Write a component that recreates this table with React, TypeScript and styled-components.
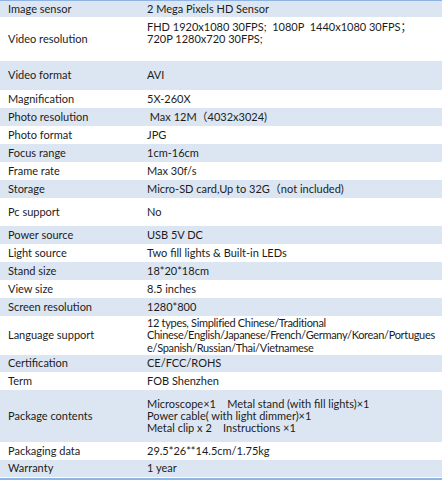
import React from "react";
import styled, { createGlobalStyle } from "styled-components";

const Global = createGlobalStyle`
  html, body { margin: 0; padding: 0; background: #ffffff; }
  body { font-family: Lato, "Liberation Sans", "Noto Sans CJK SC", sans-serif; }
`;

const Table = styled.div`
  width: 442px;
  border-top: 1px solid #8eb4e3;
  border-bottom: 2px solid #8eb4e3;
  padding-bottom: 1px;
  display: flex;
  flex-direction: column;
  box-sizing: border-box;
`;

const Row = styled.div<{ $alt: boolean; $h: number }>`
  display: grid;
  grid-template-columns: 139px 1fr;
  height: ${(p) => p.$h}px;
  background: ${(p) => (p.$alt ? "#dce6f2" : "#ffffff")};
  align-items: center;
  font-size: 11px;
  color: #1c1c1c;
  line-height: 12.2px;
`;

const Label = styled.div`
  padding-left: 8px;
  white-space: nowrap;
`;

const Value = styled.div<{ $tight?: boolean }>`
  padding-left: 8px;
  white-space: pre;
  letter-spacing: ${(p) => (p.$tight ? "-0.32px" : "0")};
`;

const Line = styled.div`
  min-height: 12.2px;
`;

type Spec = { label: string; value: string[]; h: number; tight?: boolean };

const rows: Spec[] = [
  { label: "Image sensor", value: ["2 Mega Pixels HD Sensor"], h: 16 },
  {
    label: "Video resolution",
    value: ["FHD 1920x1080 30FPS;  1080P  1440x1080 30FPS；", "720P 1280x720 30FPS;", ""],
    h: 44,
  },
  { label: "Video format", value: ["AVI"], h: 29 },
  { label: "Magnification", value: ["5X-260X"], h: 18 },
  { label: "Photo resolution", value: [" Max 12M（4032x3024)"], h: 18 },
  { label: "Photo format", value: ["JPG"], h: 18 },
  { label: "Focus range", value: ["1cm-16cm"], h: 18 },
  { label: "Frame rate", value: ["Max 30f/s"], h: 18 },
  { label: "Storage", value: ["Micro-SD card,Up to 32G（not included)"], h: 18 },
  { label: "Pc support", value: ["No"], h: 28 },
  { label: "Power source", value: ["USB 5V DC"], h: 18 },
  { label: "Light source", value: ["Two fill lights & Built-in LEDs"], h: 18 },
  { label: "Stand size", value: ["18*20*18cm"], h: 18 },
  { label: "View size", value: ["8.5 inches"], h: 18 },
  { label: "Screen resolution", value: ["1280*800"], h: 18 },
  {
    label: "Language support",
    value: [
      "12 types, Simplified Chinese/Traditional",
      "Chinese/English/Japanese/French/Germany/Korean/Portugues",
      "e/Spanish/Russian/Thai/Vietnamese",
    ],
    h: 39,
    tight: true,
  },
  { label: "Certification", value: ["CE/FCC/ROHS"], h: 17 },
  { label: "Term", value: ["FOB Shenzhen"], h: 18 },
  {
    label: "Package contents",
    value: [
      "Microscope×1    Metal stand (with fill lights)×1",
      "Power cable( with light dimmer)×1",
      "Metal clip x 2    Instructions ×1",
    ],
    h: 52,
  },
  { label: "Packaging data", value: ["29.5*26**14.5cm/1.75kg"], h: 18 },
  { label: "Warranty", value: ["1 year"], h: 17 },
];

export default function App() {
  return (
    <>
      <Global />
      <Table>
        {rows.map((r, i) => (
          <Row key={r.label} $alt={i % 2 === 0} $h={r.h}>
            <Label>{r.label}</Label>
            <Value $tight={r.tight}>
              {r.value.map((v, j) => (
                <Line key={j}>{v}</Line>
              ))}
            </Value>
          </Row>
        ))}
      </Table>
    </>
  );
}
